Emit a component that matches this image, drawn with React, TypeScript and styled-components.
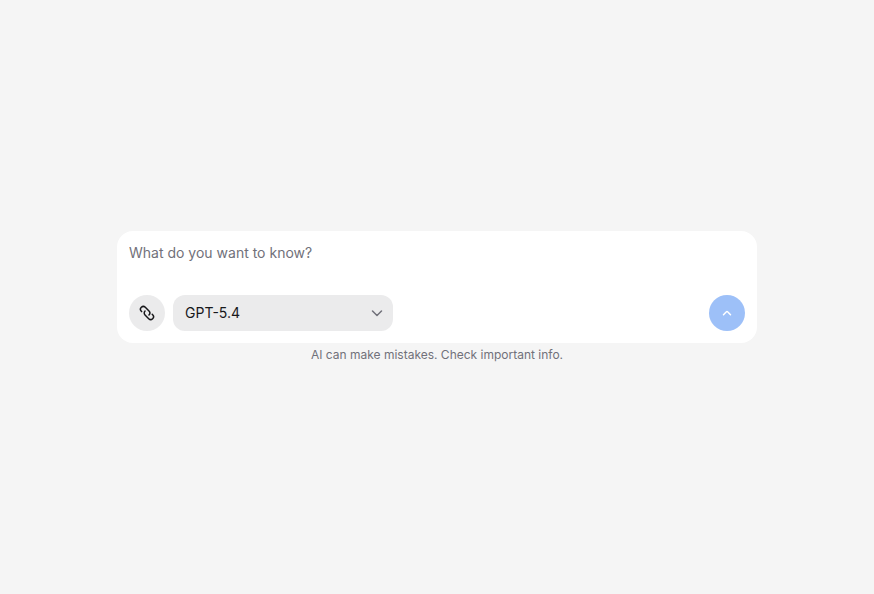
import React from "react";
import styled, { createGlobalStyle } from "styled-components";

const GlobalStyle = createGlobalStyle`
  *, *::before, *::after { box-sizing: border-box; }
  body {
    margin: 0;
    background: #f5f5f5;
    color: #18181b;
    font-family: Inter, sans-serif;
    -webkit-font-smoothing: antialiased;
  }
`;

const Page = styled.main`
  min-height: 100vh;
  display: flex;
  flex-direction: column;
  align-items: center;
  justify-content: center;
  gap: 4px;
  padding: 16px;
`;

const Composer = styled.form`
  width: 100%;
  max-width: 640px;
  display: flex;
  flex-direction: column;
  gap: 8px;
  padding: 12px;
  border-radius: 16px;
  background: #ffffff;
`;

const Prompt = styled.textarea`
  display: block;
  width: 100%;
  height: 44px;
  padding: 0;
  border: 0;
  outline: 0;
  resize: none;
  background: transparent;
  color: inherit;
  font: 400 14px/20px Inter, sans-serif;
  &::placeholder { color: #71717a; opacity: 1; }
`;

const Toolbar = styled.div`
  display: flex;
  align-items: center;
  gap: 8px;
`;

const RoundButton = styled.button<{ $tone: "neutral" | "accent" }>`
  display: grid;
  place-items: center;
  width: 36px;
  height: 36px;
  padding: 0;
  border: 0;
  border-radius: 50%;
  background: ${(p) => (p.$tone === "accent" ? "#9dc0f8" : "#ebebec")};
  color: ${(p) => (p.$tone === "accent" ? "#ffffff" : "#18181b")};
  margin-left: ${(p) => (p.$tone === "accent" ? "auto" : "0")};
`;

const SelectWrap = styled.div`
  display: grid;
  align-items: center;
  width: 220px;
  svg {
    grid-area: 1 / 1;
    justify-self: end;
    margin-right: 8px;
    color: #71717a;
    pointer-events: none;
  }
`;

const ModelSelect = styled.select`
  grid-area: 1 / 1;
  appearance: none;
  width: 100%;
  height: 36px;
  padding: 0 32px 0 12px;
  border: 0;
  border-radius: 12px;
  background: #ebebec;
  color: inherit;
  font: 400 14px/20px Inter, sans-serif;
`;

const Note = styled.p`
  margin: 0;
  color: #71717a;
  font-size: 12px;
  line-height: 16px;
  text-align: center;
`;

const Icon = styled.svg.attrs({
  width: 16,
  height: 16,
  viewBox: "0 0 16 16",
  fill: "none",
  stroke: "currentColor",
  strokeWidth: 1.5,
  strokeLinecap: "round",
  strokeLinejoin: "round",
  "aria-hidden": true,
})``;

export default function App() {
  return (
    <>
      <GlobalStyle />
      <Page>
        <Composer onSubmit={(e) => e.preventDefault()}>
          <Prompt aria-label="Prompt" placeholder="What do you want to know?" />
          <Toolbar>
            <RoundButton type="button" $tone="neutral" aria-label="Attach file">
              <Icon>
                <g transform="rotate(45 8 8)">
                  <path d="M3.2 10.8H2.8a2.8 2.8 0 0 1 0-5.6H8a2.8 2.8 0 0 1 2.8 2.8" />
                  <path d="M12.6 5.2h.6a2.8 2.8 0 0 1 0 5.6H8A2.8 2.8 0 0 1 5.2 8" />
                </g>
              </Icon>
            </RoundButton>
            <SelectWrap>
              <ModelSelect aria-label="Model">
                <option>GPT-5.4</option>
              </ModelSelect>
              <Icon>
                <path d="m3.5 6 4.5 4.5 4.5-4.5" />
              </Icon>
            </SelectWrap>
            <RoundButton type="submit" $tone="accent" aria-label="Send">
              <Icon>
                <path d="m4.5 9.7 2.9-3a.8.8 0 0 1 1.2 0l2.9 3" />
              </Icon>
            </RoundButton>
          </Toolbar>
        </Composer>
        <Note>AI can make mistakes. Check important info.</Note>
      </Page>
    </>
  );
}
